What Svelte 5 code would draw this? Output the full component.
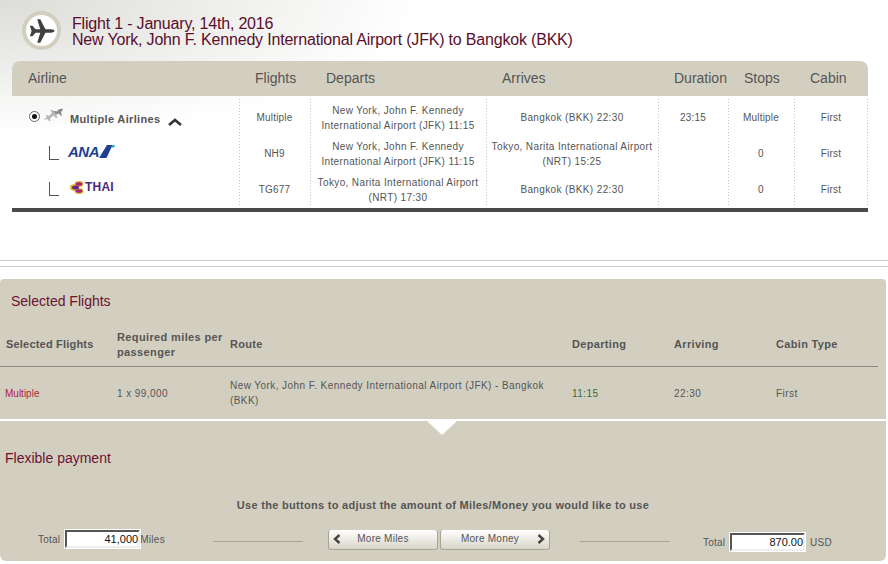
<script>
  const cols = ["Airline", "Flights", "Departs", "Arrives", "Duration", "Stops", "Cabin"];

  const rows = [
    {
      kind: "multi",
      flight: "Multiple",
      departs: ["New York, John F. Kennedy", "International Airport (JFK) 11:15"],
      arrives: ["Bangkok (BKK) 22:30"],
      duration: "23:15",
      stops: "Multiple"
    },
    {
      kind: "ana",
      flight: "NH9",
      departs: ["New York, John F. Kennedy", "International Airport (JFK) 11:15"],
      arrives: ["Tokyo, Narita International Airport", "(NRT) 15:25"],
      duration: "",
      stops: "0"
    },
    {
      kind: "thai",
      flight: "TG677",
      departs: ["Tokyo, Narita International Airport", "(NRT) 17:30"],
      arrives: ["Bangkok (BKK) 22:30"],
      duration: "",
      stops: "0"
    }
  ];
</script>

<div class="page">
  <header class="flight-head">
    <div class="badge">
      <svg width="26" height="26" viewBox="0 0 30 30">
        <path fill="#404040" d="M1 9 L4 9 L7.5 13 L13 13 L9.5 1.5 L13 1.5 L19 13 L25 13 C28 13 29.5 14.2 29.5 15 C29.5 15.8 28 17 25 17 L19 17 L13 28.5 L9.5 28.5 L13 17 L7.5 17 L4 21 L1 21 L3 15 Z" />
      </svg>
    </div>
    <div class="head-text">
      <div>Flight 1 - January, 14th, 2016</div>
      <div>New York, John F. Kennedy International Airport (JFK) to Bangkok (BKK)</div>
    </div>
  </header>

  <section class="results">
    <div class="thead grid">
      {#each cols as c}
        <div class="th">{c}</div>
      {/each}
    </div>
    <div class="tbody">
      {#each rows as r}
        <div class="row grid">
          <div class="cell airline">
            {#if r.kind === "multi"}
              <span class="radio"><span class="dot"></span></span>
              <svg class="planes" width="20" height="14" viewBox="0 0 20 14">
                <path fill="#b5b5b5" d="M0 12 L3 9 L1.5 7 L3 7 L5 8 L8 5 L6 1.5 L8 2 L11 4.5 L13.5 2 C14.5 1.2 15.5 1.5 14.8 2.6 L12 6 L13.5 10 L12 10 L9.5 7.5 L6 10.5 L6.5 13 L5 13 L3.8 11 Z" />
                <path fill="#8a8a8a" d="M9 3 L11 3 L13 4 L15 1.5 C16 .6 19.6 .2 19 1.4 L17 4 L18 8 L16.6 7.4 L14.8 5.4 L12.6 6.4 Z" />
              </svg>
              <b class="multi">Multiple Airlines</b>
              <svg class="caret" width="14" height="8" viewBox="0 0 14 8">
                <path fill="none" stroke="#333" stroke-width="2.6" d="M1 7 L7 2 L13 7" />
              </svg>
            {:else}
              <span class="elbow"></span>
              {#if r.kind === "ana"}
                <span class="ana">ANA</span>
                <svg class="ana-mark" width="16" height="13" viewBox="0 0 16 13">
                  <path fill="#1d3f94" d="M0 13 L8 0 L13.5 0 L7.5 13 Z" />
                  <path fill="#2a9fd8" d="M13.5 0 L16 0 L15 2.5 L12.4 2.5 Z" />
                </svg>
              {:else}
                <svg class="orchid" width="14" height="13" viewBox="0 0 14 13">
                  <ellipse cx="4" cy="6.5" rx="4" ry="3.2" fill="#e6b32c" />
                  <ellipse cx="9" cy="3" rx="4.5" ry="3" fill="#e6b32c" />
                  <ellipse cx="9" cy="10" rx="4.5" ry="3" fill="#e6b32c" />
                  <ellipse cx="9" cy="3" rx="3.4" ry="1.8" fill="#a3247c" />
                  <ellipse cx="9" cy="10" rx="3.4" ry="1.8" fill="#a3247c" />
                  <ellipse cx="5.5" cy="6.5" rx="3.5" ry="2" fill="#5c2a86" />
                </svg>
                <span class="thai">THAI</span>
              {/if}
            {/if}
          </div>
          <div class="cell sep">{r.flight}</div>
          <div class="cell sep loc" class:two={r.departs.length > 1}><div>{#each r.departs as l}<div>{l}</div>{/each}</div></div>
          <div class="cell sep loc" class:two={r.arrives.length > 1}><div>{#each r.arrives as l}<div>{l}</div>{/each}</div></div>
          <div class="cell sep">{r.duration}</div>
          <div class="cell sep">{r.stops}</div>
          <div class="cell sep last">First</div>
        </div>
      {/each}
    </div>
  </section>

  <div class="rule first"></div>
  <div class="rule"></div>

  <section class="panel">
    <h2 class="selected-title">Selected Flights</h2>
    <div class="sel-grid sel-head">
      <div>Selected Flights</div>
      <div>Required miles per<br />passenger</div>
      <div>Route</div>
      <div>Departing</div>
      <div>Arriving</div>
      <div>Cabin Type</div>
    </div>
    <div class="sel-grid sel-row">
      <div class="red">Multiple</div>
      <div>1 x 99,000</div>
      <div>New York, John F. Kennedy International Airport (JFK) - Bangkok (BKK)</div>
      <div class="green">11:15</div>
      <div>22:30</div>
      <div>First</div>
    </div>

    <div class="divider"><span class="notch"></span></div>

    <h2 class="flex-title">Flexible payment</h2>
    <p class="hint">Use the buttons to adjust the amount of Miles/Money you would like to use</p>

    <div class="controls">
      <div class="total miles">
        <span>Total</span>
        <span class="field">41,000</span>
        <span class="unit">Miles</span>
      </div>
      <span class="line l1"></span>
      <div class="buttons">
        <button class="btn left">
          <svg width="8" height="10" viewBox="0 0 8 10"><path fill="none" stroke="#444" stroke-width="2.4" d="M6.5 1 L2 5 L6.5 9" /></svg>
          <span>More Miles</span>
        </button>
        <button class="btn right">
          <span>More Money</span>
          <svg width="8" height="10" viewBox="0 0 8 10"><path fill="none" stroke="#444" stroke-width="2.4" d="M1.5 1 L6 5 L1.5 9" /></svg>
        </button>
      </div>
      <span class="line l2"></span>
      <div class="total usd">
        <span>Total</span>
        <span class="field">870.00</span>
        <span class="unit">USD</span>
      </div>
    </div>
  </section>
</div>

<style>
  :global(body) {
    margin: 0;
    background: #fff;
  }

  .page {
    width: 888px;
    height: 564px;
    overflow: hidden;
    font-family: "Liberation Sans", Arial, sans-serif;
    color: #555;
    background: radial-gradient(ellipse 420px 135px at 0 0, #dcdcd8 0%, #fff 100%) no-repeat;
  }

  .flight-head {
    height: 61px;
    box-sizing: border-box;
    padding: 11px 0 0 22px;
    display: flex;
    gap: 11px;
  }

  .badge {
    width: 39px;
    height: 39px;
    box-sizing: border-box;
    border: 4px solid #d3cfc0;
    border-radius: 50%;
    background: #fff;
    display: flex;
    align-items: center;
    justify-content: center;
  }

  .head-text {
    font-size: 16px;
    line-height: 16px;
    letter-spacing: -0.19px;
    color: #5a0e2a;
    padding-top: 5px;
  }

  .results {
    margin-left: 12px;
    width: 856px;
    border-bottom: 4px solid #4a4a4a;
    height: 147px;
  }

  .grid {
    display: grid;
    grid-template-columns: 227px 71px 176px 172px 70px 66px 74px;
  }

  .thead {
    height: 35px;
    box-sizing: border-box;
    padding-bottom: 2px;
    background: #d3cfc0;
    border-radius: 8px 8px 0 0;
    align-items: center;
    font-size: 14px;
    color: #555;
  }

  .th {
    padding-left: 16px;
  }

  .tbody {
    height: 112px;
    padding-top: 3px;
    box-sizing: border-box;
  }

  .row {
    height: 36px;
    font-size: 10px;
    line-height: 15px;
    letter-spacing: 0.2px;
    color: #555;
  }

  .cell {
    display: flex;
    align-items: center;
    justify-content: center;
    text-align: center;
  }

  /* the source table's separators are 1px dots on a 3px pitch */
  .sep {
    background: linear-gradient(#c4c4c4 1px, transparent 1px) left top / 1px 3px repeat-y;
  }

  .loc {
    letter-spacing: 0.37px;
  }

  .two {
    padding-top: 2px;
  }

  .last {
    background:
      linear-gradient(#c4c4c4 1px, transparent 1px) left top / 1px 3px repeat-y,
      linear-gradient(#c4c4c4 1px, transparent 1px) right top / 1px 3px repeat-y;
  }

  .airline {
    justify-content: flex-start;
    padding-left: 17px;
  }

  .radio {
    width: 11px;
    height: 11px;
    box-sizing: border-box;
    border: 1px solid #666;
    border-radius: 50%;
    background: #fff;
    display: flex;
    align-items: center;
    justify-content: center;
    margin-bottom: 2px;
  }

  .dot {
    width: 5px;
    height: 5px;
    border-radius: 50%;
    background: #111;
  }

  .planes {
    margin: -5px 0 0 4px;
  }

  .multi {
    margin-left: 6px;
    margin-top: 5px;
    font-size: 11px;
    color: #555;
    letter-spacing: 0.35px;
  }

  .caret {
    margin: 9px 0 0 7px;
  }

  .elbow {
    width: 9px;
    height: 13px;
    border-left: 1px solid #555;
    border-bottom: 1px solid #555;
    margin: 0 9px 0 20px;
  }

  .ana {
    font-size: 15px;
    font-weight: bold;
    font-style: italic;
    color: #1d3f94;
    letter-spacing: -0.5px;
    margin-top: -3px;
    line-height: 15px;
  }

  .ana-mark {
    margin: -3px 0 0 0;
  }

  .orchid {
    margin: -3px 1px 0 2px;
  }

  .thai {
    font-size: 12px;
    font-weight: bold;
    color: #4a2a7c;
    margin-top: -3px;
  }

  .rule {
    height: 1px;
    margin-top: 5px;
    background: #ccc;
  }

  .rule.first {
    margin-top: 48px;
  }

  .panel {
    width: 886px;
    height: 282px;
    margin-top: 12px;
    background: #d3cfc0;
    border-radius: 4px 4px 6px 6px;
    position: relative;
  }

  h2 {
    margin: 0;
    font-weight: normal;
    font-size: 14px;
    line-height: 16px;
    color: #6a1232;
  }

  .selected-title {
    padding: 14px 0 0 11px;
  }

  .sel-grid {
    display: grid;
    grid-template-columns: 112px 113px 342px 102px 102px 1fr;
    padding-left: 5px;
    margin-right: 8px;
    font-size: 11px;
    line-height: 15px;
    align-items: center;
  }

  .sel-head {
    margin-top: 16px;
    height: 42px;
    padding-bottom: 2px;
    box-sizing: border-box;
    font-weight: bold;
    border-bottom: 1px solid #8a877c;
    letter-spacing: 0.33px;
  }

  .sel-head > div:first-child {
    padding-left: 1px;
    letter-spacing: 0.2px;
  }

  .sel-head > div:nth-child(2) {
    letter-spacing: 0.37px;
  }

  .sel-row {
    height: 52px;
    font-size: 10px;
    letter-spacing: 0.43px;
  }

  .sel-row > div:nth-child(3) {
    padding-right: 14px;
  }

  .red {
    color: #b01e44;
    letter-spacing: 0;
  }

  .green {
    color: #3a6a3a;
  }

  .divider {
    height: 2px;
    background: #fff;
    position: relative;
  }

  .notch {
    position: absolute;
    left: 427px;
    top: 2px;
    border-left: 15px solid transparent;
    border-right: 15px solid transparent;
    border-top: 14px solid #fff;
  }

  .flex-title {
    padding: 29px 0 0 5px;
  }

  .hint {
    margin: 32px 0 0;
    text-align: center;
    font-size: 11px;
    line-height: 15px;
    font-weight: bold;
    letter-spacing: 0.3px;
    color: #555;
  }

  .controls {
    display: flex;
    align-items: flex-start;
    margin-top: 16px;
    height: 24px;
    font-size: 10px;
    letter-spacing: 0.2px;
  }

  .total {
    display: flex;
    align-items: center;
  }

  .miles {
    margin-left: 38px;
    gap: 5px;
    height: 20px;
  }

  .miles .unit {
    margin-left: -5px;
    letter-spacing: 0.3px;
  }

  .usd {
    margin-left: 33px;
    gap: 5px;
    height: 20px;
    margin-top: 3px;
  }

  .usd .unit {
    margin-left: 0;
  }

  .field {
    width: 75px;
    height: 18px;
    box-sizing: border-box;
    border: 2px solid #555;
    border-right-color: #eee;
    border-bottom-color: #eee;
    outline: 1px solid #fff;
    background: #fff;
    color: #111;
    text-align: right;
    padding-right: 0;
    font-size: 11px;
    line-height: 15px;
    letter-spacing: 0;
  }

  .line {
    width: 90px;
    height: 1px;
    background: #a8a598;
    margin-top: 12px;
  }

  .l1 {
    margin-left: 48px;
  }

  .l2 {
    margin-left: 30px;
  }

  .buttons {
    display: flex;
    gap: 2px;
    margin: 1px 0 0 25px;
  }

  .btn {
    width: 110px;
    height: 20px;
    padding: 0 4px 2px;
    box-sizing: border-box;
    border: 1px solid #a8a598;
    border-top: 0;
    border-radius: 3px;
    background: linear-gradient(#fff, #d8d5c8);
    font-family: inherit;
    font-size: 10px;
    letter-spacing: 0.25px;
    color: #555;
    display: flex;
    align-items: center;
    justify-content: space-between;
  }

  .btn span {
    flex: 1;
    text-align: center;
  }

  .left span {
    padding-right: 8px;
  }

  .right span {
    padding-right: 2px;
  }
</style>
